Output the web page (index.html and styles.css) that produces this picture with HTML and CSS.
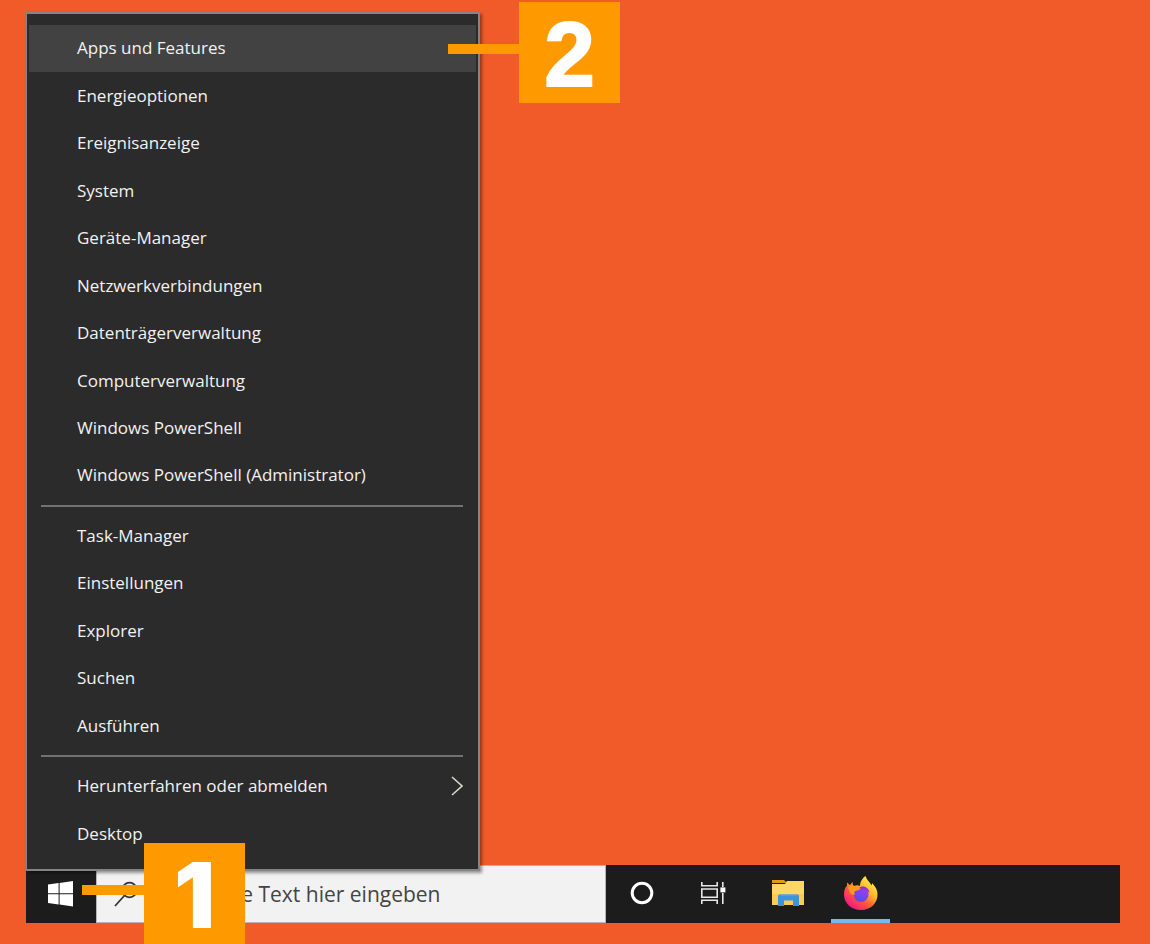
FILE: index.html
```html
<!DOCTYPE html>
<html lang="de">
<head>
  <meta charset="UTF-8">
  <title>Apps und Features</title>
  <meta name="viewport" content="width=device-width, initial-scale=1.0">
  <link rel="stylesheet" href="styles.css">
</head>
<body>
  <div class="desktop">
    <nav class="menu">
      <button class="menu-item active">Apps und Features</button>
      <button class="menu-item">Energieoptionen</button>
      <button class="menu-item">Ereignisanzeige</button>
      <button class="menu-item">System</button>
      <button class="menu-item">Geräte-Manager</button>
      <button class="menu-item">Netzwerkverbindungen</button>
      <button class="menu-item">Datenträgerverwaltung</button>
      <button class="menu-item">Computerverwaltung</button>
      <button class="menu-item">Windows PowerShell</button>
      <button class="menu-item">Windows PowerShell (Administrator)</button>
      <hr>
      <button class="menu-item">Task-Manager</button>
      <button class="menu-item">Einstellungen</button>
      <button class="menu-item">Explorer</button>
      <button class="menu-item">Suchen</button>
      <button class="menu-item">Ausführen</button>
      <hr>
      <button class="menu-item">Herunterfahren oder abmelden
        <svg class="chevron" width="12" height="20" viewBox="0 0 12 20"><path d="M1 1l10 9-10 9" fill="none" stroke="#d8d8c8" stroke-width="1.6"/></svg>
      </button>
      <button class="menu-item">Desktop</button>
    </nav>

    <div class="taskbar">
      <button class="start" aria-label="Start">
        <svg width="26" height="26" viewBox="0 0 26 26" fill="#fff">
          <path d="M0 3.600l10.600-1.500v10.200H0zM11.600 2L25 0v12.300H11.600zM0 13.300h10.600v10.200L0 22zM11.600 13.300H25V25.500l-13.400-1.900z"/>
        </svg>
      </button>
      <div class="search">
        <svg width="24" height="26" viewBox="0 0 24 26" fill="none" stroke="#333" stroke-width="1.8">
          <circle cx="15.500" cy="9" r="7.300"/>
          <path d="M10.500 14.500L1 25"/>
        </svg>
        <input type="text" aria-label="Suche" placeholder="Zur Suche Text hier eingeben">
      </div>
      <div class="apps">
        <button class="app" aria-label="Cortana">
          <svg width="24" height="24" viewBox="0 0 24 24"><circle cx="12" cy="12" r="9.800" fill="none" stroke="#fff" stroke-width="3"/></svg>
        </button>
        <button class="app" aria-label="Taskansicht">
          <svg width="30" height="24" viewBox="0 0 30 24" fill="none" stroke="#e8e8e8" stroke-width="1.6">
            <path d="M1.800 1v3.800h15.400V1M1.800 23v-3.800h15.400V23M1.800 8h15.400v8.200H1.800zM22.800 1v5M22.800 12v11"/>
            <path d="M20.400 6.400h5v5h-5z" fill="#fff" stroke="none"/>
          </svg>
        </button>
        <button class="app" aria-label="Explorer">
          <svg width="34" height="28" viewBox="0 0 34 28">
            <path d="M1 1h12l3 3H1z" fill="#e09b12"/>
            <path d="M1 5h13l2-3h17v24H1z" fill="#ffd767"/>
            <path d="M1 15h32v11H1z" fill="#fccb52"/>
            <path d="M7 27V17q0-1.500 1.500-1.500h18q1.500 0 1.500 1.500v10h-6v-5.500h-9V27z" fill="#3895de"/>
            <path d="M8.500 16h18" stroke="#56aeea"/>
          </svg>
        </button>
        <button class="app running" aria-label="Firefox">
          <svg width="36" height="36" viewBox="0 0 36 36">
            <defs>
              <linearGradient id="fox" x1=".85" y1=".1" x2=".2" y2=".95">
                <stop offset="0" stop-color="#fff04a"/>
                <stop offset=".35" stop-color="#ffb52a"/>
                <stop offset=".62" stop-color="#ff5a38"/>
                <stop offset="1" stop-color="#f3128a"/>
              </linearGradient>
              <linearGradient id="globe" x1=".7" y1="0" x2=".3" y2="1">
                <stop offset="0" stop-color="#a13bf0"/>
                <stop offset="1" stop-color="#5a4be0"/>
              </linearGradient>
            </defs>
            <path d="M22.500 1c1 3 2.500 4.500 4.500 7l1.500 2.500c.5-1 .5-1.500.5-2.500 4 4 5.500 7.500 5.500 11.500 0 9-7 15.500-16.500 15.500S1 28.500 1 19.500c0-4 1-7 3-9V7.500l3 2.500c1-1 2-2.500 2.500-3 0 2 .5 3 1.500 4 2-1 4-1 6 0C17 7 19.500 3 22.500 1z" fill="url(#fox)"/>
            <circle cx="18" cy="19.500" r="7.500" fill="url(#globe)"/>
            <path d="M5 11.500c5-1.500 9-1 13 2-2 1-3 2-5 2.300-2 .7-2 2-1.200 3.700-3 1-6-2-6.800-8z" fill="#ff9a1f"/>
            <path d="M17 12c5-1.500 9 1.500 9.500 6-2-3-5-4-8.500-3.500z" fill="#8e35d6"/>
          </svg>
        </button>
      </div>
    </div>

    <div class="callout callout-one"><span class="number">1</span></div>
    <div class="callout callout-two"><span class="number">2</span></div>
  </div>
</body>
</html>
```
FILE: styles.css
```css
* {
  box-sizing: border-box;
}

body {
  margin: 0;
  background: #f15a29;
  font-family: "Open Sans", "Noto Sans", sans-serif;
}

.desktop {
  position: relative;
  display: flex;
  flex-direction: column;
  min-height: 100vh;
  padding: 12px 30px 21px 26px;
}

button {
  border: none;
  background: none;
  font-family: inherit;
  cursor: pointer;
}

/* context menu */
.menu {
  position: relative;
  z-index: 1;
  flex: 1;
  display: flex;
  flex-direction: column;
  width: 454px;
  max-width: 100%;
  margin-bottom: -6px;
  padding: 11px 2px;
  background: #2b2b2b;
  border: 2px solid #858585;
  border-left-width: 1px;
  box-shadow: 2px 2px 3px rgba(0, 0, 0, 0.4);
}

.menu-item {
  flex: 1;
  display: flex;
  align-items: center;
  justify-content: space-between;
  padding: 0 13px 2px 48px;
  color: #f2f2f2;
  font-size: 17px;
  font-weight: 500;
  text-align: left;
  white-space: nowrap;
}

.menu-item.active,
.menu-item:hover {
  background: #424242;
}

.menu hr {
  width: 422px;
  max-width: 100%;
  height: 2px;
  margin: 5px 12px 6px;
  border: none;
  background: #727272;
}

/* taskbar */
.taskbar {
  display: flex;
  height: 58px;
  background: #1c1c1c;
}

.start {
  display: flex;
  align-items: center;
  justify-content: center;
  width: 70px;
  padding: 0;
}

.search {
  display: flex;
  align-items: center;
  gap: 17px;
  width: 510px;
  padding-left: 17px;
  background: #f2f2f2;
  border: 1px solid #b5b5b5;
}

.search input {
  flex: 1;
  min-width: 0;
  padding: 0;
  border: none;
  outline: none;
  background: none;
  color: #444;
  font-family: inherit;
  font-size: 21px;
}

.search input::placeholder {
  color: #444;
  opacity: 1;
}

.apps {
  display: flex;
  gap: 14px;
  padding-left: 6px;
}

.app {
  display: flex;
  align-items: center;
  justify-content: center;
  width: 59px;
  padding: 0 0 2px;
}

.app.running {
  box-shadow: inset 0 -4px #76b9ed;
}

/* numbered hints */
.callout {
  position: absolute;
  z-index: 2;
  display: flex;
}

.callout::before {
  content: "";
  height: 10px;
  margin-top: 42px;
  background: #ff9900;
}

.callout-one {
  left: 82px;
  bottom: 0;
}

.callout-one::before {
  width: 62px;
}

.callout-two {
  left: 448px;
  top: 2px;
}

.callout-two::before {
  width: 71px;
}

.number {
  width: 101px;
  height: 101px;
  background: #ff9900;
  color: #fff;
  font-family: Inter, sans-serif;
  font-size: 91px;
  font-weight: 900;
  line-height: 105px;
  text-align: center;
}

.callout-two .number {
  font-family: "Liberation Sans", Arial, sans-serif;
  -webkit-text-stroke: 2px #fff;
}
```
